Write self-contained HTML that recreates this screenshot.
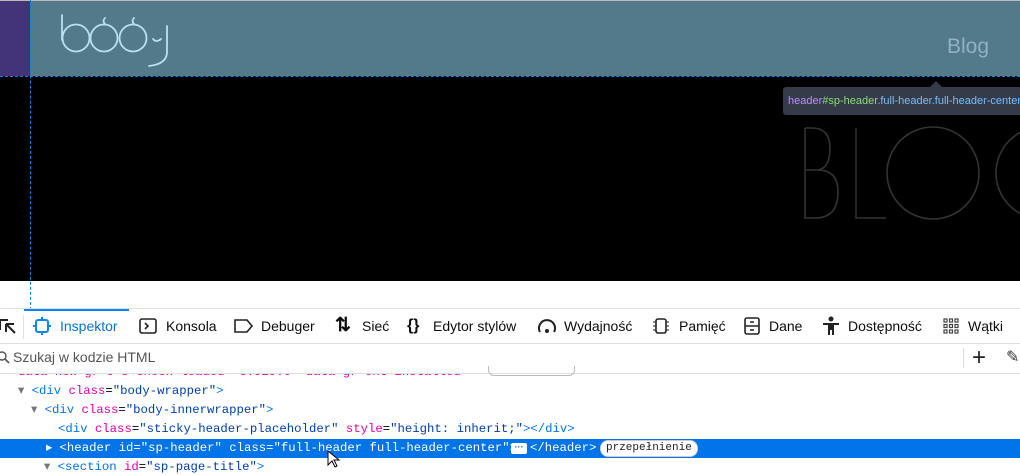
<!DOCTYPE html>
<html><head><meta charset="utf-8"><style>
*{margin:0;padding:0;box-sizing:border-box}
body{width:1020px;height:468px;overflow:hidden;background:#fff;font-family:"Liberation Sans",sans-serif;position:relative}
.abs{position:absolute}
.mono{font-family:"Liberation Mono",monospace;font-size:12.3px;white-space:pre}
.tab{position:absolute;top:309px;height:34px;line-height:34px;font-size:14px;color:#0c0c0d}
.tag{color:#0074e8}.at{color:#dd00a9}.val{color:#003eaa}
</style></head><body>
<div class="abs" style="left:0;top:0;width:1020px;height:76px;background:#527a8a"></div>
<div class="abs" style="left:0;top:0;width:30px;height:76px;background:#43347a"></div>
<div class="abs" style="left:0;top:0;width:1020px;height:1px;background:#bbb"></div>
<svg class="abs" style="left:0;top:0" width="200" height="76" viewBox="0 0 200 76">
<g fill="none" stroke="#b9e0ee" stroke-width="1.8" stroke-linecap="round">
<path d="M62 15 V40"/><circle cx="76" cy="38" r="13.5"/><circle cx="104" cy="38" r="13.5"/><circle cx="133" cy="38" r="13.5"/>
<path d="M105 24 q-3 -3 0 -6"/><path d="M134 24 q-3 -3 0 -6"/>
<path d="M153 39 q3 4 8 0"/><path d="M167 26 V52 q0 12 -18 14"/></g></svg>
<div class="abs" style="left:947px;top:35px;font-size:21px;color:#8fb3c2">Blog</div>
<div class="abs" style="left:0;top:76px;width:1020px;height:205px;background:#000"></div>
<svg class="abs" style="left:790px;top:110px" width="230" height="120"><g fill="none" stroke="#333" stroke-width="1.6">
<path d="M15 18 V108 H25 Q48 108 48 82 Q48 60 28 60 H15 M28 60 Q40 58 40 38 Q40 18 22 18 H15"/>
<path d="M66 18 V108 H96"/><circle cx="143" cy="63" r="46" transform="translate(0,0)"/><circle cx="252" cy="63" r="46"/></g></svg>
<div class="abs" style="left:0;top:76px;width:1020px;border-top:1px dashed #0a84d6"></div>
<div class="abs" style="left:30px;top:0;height:310px;border-left:1px dashed #0a84d6"></div>
<div class="abs" style="left:783px;top:87px;width:245px;height:28px;background:#353b48;border-radius:3px;font-size:11px;line-height:28px;padding-left:5px;color:#75bfff;white-space:nowrap"><span style="color:#b98eff">header</span><span style="color:#86de74">#sp-header</span>.full-header.full-header-center</div>
<div class="abs" style="left:930px;top:81px;width:0;height:0;border-left:6px solid transparent;border-right:6px solid transparent;border-bottom:6px solid #353b48"></div>
<!-- toolbar -->
<div class="abs" style="left:0;top:308px;width:1020px;height:1px;background:#e0e0e2"></div>
<div class="abs" style="left:0;top:343px;width:1020px;height:1px;background:#e0e0e2"></div>
<div class="abs" style="left:24px;top:309px;width:105px;height:2px;background:#0a84ff"></div>
<div class="abs" style="left:23px;top:315px;width:1px;height:24px;background:#e0e0e2"></div>
<svg class="abs" style="left:0;top:316px" width="16" height="20"><path d="M0 4 H8 M0 4 V14 M6 8 L15 17 M6 8 V16 M6 8 H14" stroke="#222" stroke-width="2" fill="none"/></svg>
<svg class="abs" style="left:33px;top:317px" width="18" height="18"><rect x="3" y="3" width="12" height="12" rx="2" fill="none" stroke="#0a84ff" stroke-width="2"/><path d="M9 0V3M9 15V18M0 9H3M15 9H18" stroke="#0a84ff" stroke-width="2"/></svg>
<div class="tab" style="left:60px;color:#0a6fd8">Inspektor</div>
<svg class="abs" style="left:139px;top:318px" width="18" height="16"><rect x="1" y="1" width="16" height="14" rx="2" fill="none" stroke="#222" stroke-width="1.6"/><path d="M6 5l3 3-3 3" stroke="#222" stroke-width="1.6" fill="none"/></svg>
<div class="tab" style="left:166px">Konsola</div>
<svg class="abs" style="left:234px;top:319px" width="20" height="14"><path d="M1 1H13L18 7L13 13H1Z" fill="none" stroke="#222" stroke-width="1.6"/></svg>
<div class="tab" style="left:261px">Debuger</div>
<div class="tab" style="left:335px;font-size:19px;font-weight:bold">⇅</div>
<div class="tab" style="left:362px">Sieć</div>
<div class="tab" style="left:407px;font-size:16px;font-weight:bold">{}</div>
<div class="tab" style="left:433px">Edytor stylów</div>
<svg class="abs" style="left:537px;top:317px" width="20" height="18"><path d="M3 15A8 8 0 1 1 17 15" fill="none" stroke="#222" stroke-width="2"/><circle cx="10" cy="14" r="2" fill="#222"/></svg>
<div class="tab" style="left:564px">Wydajność</div>
<svg class="abs" style="left:652px;top:317px" width="18" height="18"><rect x="4" y="2" width="10" height="14" rx="2" fill="none" stroke="#222" stroke-width="1.6"/><path d="M1 5H4M1 9H4M1 13H4M14 5H17M14 9H17M14 13H17" stroke="#222"/></svg>
<div class="tab" style="left:679px">Pamięć</div>
<svg class="abs" style="left:744px;top:317px" width="16" height="18"><rect x="1" y="1" width="14" height="16" rx="2" fill="none" stroke="#222" stroke-width="1.6"/><path d="M1 9H15M6 5H10M6 13H10" stroke="#222" stroke-width="1.4"/></svg>
<div class="tab" style="left:769px">Dane</div>
<svg class="abs" style="left:822px;top:316px" width="18" height="20"><circle cx="9" cy="3" r="2.5" fill="#222"/><path d="M1 7H17V9H12V19H10V14H8V19H6V9H1Z" fill="#222"/></svg>
<div class="tab" style="left:848px">Dostępność</div>
<svg class="abs" style="left:943px;top:318px" width="16" height="16"><g fill="none" stroke="#444" stroke-width="1.2"><rect x="1" y="1" width="3" height="3"/><rect x="6.5" y="1" width="3" height="3"/><rect x="12" y="1" width="3" height="3"/><rect x="1" y="6.5" width="3" height="3"/><rect x="6.5" y="6.5" width="3" height="3"/><rect x="12" y="6.5" width="3" height="3"/><rect x="1" y="12" width="3" height="3"/><rect x="6.5" y="12" width="3" height="3"/><rect x="12" y="12" width="3" height="3"/></g></svg>
<div class="tab" style="left:968px">Wątki</div>
<!-- search -->
<svg class="abs" style="left:0;top:351px" width="10" height="14"><circle cx="2" cy="5" r="4" fill="none" stroke="#555" stroke-width="1.4"/><path d="M5 8l4 4" stroke="#555" stroke-width="1.6"/></svg>
<div class="abs" style="left:13px;top:349px;font-size:14px;color:#555">Szukaj w kodzie HTML</div>
<div class="abs" style="left:963px;top:348px;width:1px;height:20px;background:#ddd"></div>
<div class="abs" style="left:972px;top:343px;font-size:24px;line-height:30px;color:#222">+</div>
<div class="abs" style="left:1006px;top:347px;font-size:16px;color:#333">✎</div>
<div class="abs" style="left:0;top:373px;width:1020px;height:1px;background:#e0e0e2"></div>
<!-- tree -->
<div class="abs" style="left:18px;top:374px;height:4px;overflow:hidden;width:500px"><div class="mono" style="margin-top:-8px;line-height:12px;color:#dd00a9">data-new-gr-c-s-check-loaded="8.929.0" data-gr-ext-installed=""&gt; </div></div>
<div class="abs" style="left:488px;top:366px;width:87px;height:10px;border:1px solid #bbb;border-top:none;border-radius:0 0 6px 6px"></div>
<div class="abs mono" style="left:18px;top:383px;line-height:16px"><span style="color:#777">▾</span> <span class="tag">&lt;div</span> <span class="at">class</span>=<span class="val">"body-wrapper"</span><span class="tag">&gt;</span></div>
<div class="abs mono" style="left:31px;top:402px;line-height:16px"><span style="color:#777">▾</span> <span class="tag">&lt;div</span> <span class="at">class</span>=<span class="val">"body-innerwrapper"</span><span class="tag">&gt;</span></div>
<div class="abs mono" style="left:58px;top:421px;line-height:16px"><span class="tag">&lt;div</span> <span class="at">class</span>=<span class="val">"sticky-header-placeholder"</span> <span class="at">style</span>=<span class="val">"height: inherit;"</span><span class="tag">&gt;&lt;/div&gt;</span></div>
<div class="abs" style="left:0;top:439px;width:1020px;height:19px;background:#0074e8"></div>
<div class="abs mono" style="left:46px;top:440px;line-height:17px;color:#fff">▸ &lt;header id="sp-header" class="full-header full-header-center"&gt;</div>
<div class="abs" style="left:511px;top:443px;width:16px;height:11px;background:#fff;border-radius:2px;font-size:9px;line-height:8px;text-align:center;color:#0074e8;font-weight:bold">···</div>
<div class="abs mono" style="left:530px;top:440px;line-height:17px;color:#fff">&lt;/header&gt;</div>
<div class="abs mono" style="left:600px;top:440px;height:17px;line-height:15px;padding:0 5px;background:#fff;border-radius:8px;font-size:11px;color:#222;border:1px solid #ccc">przepełnienie</div>
<div class="abs mono" style="left:44px;top:459px;line-height:16px"><span style="color:#777">▾</span> <span class="tag">&lt;section</span> <span class="at">id</span>=<span class="val">"sp-page-title"</span><span class="tag">&gt;</span></div>
<svg class="abs" style="left:327px;top:450px" width="14" height="18"><path d="M1 1V15L5 11L8 17L10 16L7 10H12Z" fill="#fff" stroke="#000"/></svg>
</body></html>
